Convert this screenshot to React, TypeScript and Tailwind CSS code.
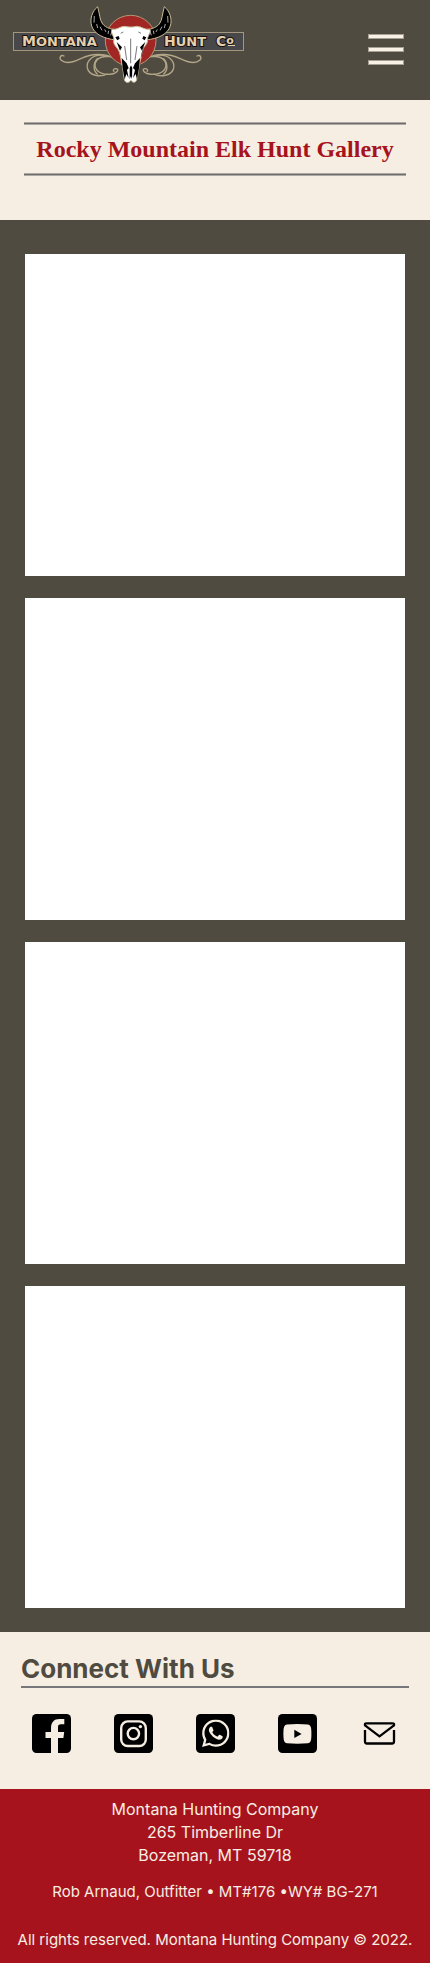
import React from "react";
import { SiWhatsapp } from "react-icons/si";

const photos = [1, 2, 3, 4];

function Flourish() {
  return (
    <g fill="none" stroke="#b3a688" strokeWidth="4" strokeLinecap="round">
      <path d="M-48 168C-58 163 -64 173 -56 181C-42 194 -14 184 4 175C34 161 72 158 104 176" />
      <path d="M72 166C38 162 18 182 22 204C27 228 62 232 82 222" />
      <path d="M88 170C54 166 42 186 46 202C52 220 76 226 96 222C114 218 118 206 108 206C100 206 98 212 102 214" />
      <path d="M52 176C40 188 38 212 52 222" />
    </g>
  );
}

function Horn() {
  return (
    <>
      <path
        d="M53 20C36 34 29 58 35 78C43 102 70 116 108 120L116 88C96 90 78 84 68 72C59 60 59 42 53 20Z"
        fill="#000"
        stroke="#c9b893"
        strokeWidth="3"
      />
      <path d="M43 48L42 68M50 72L53 84M60 80L66 91M74 88L78 96M86 92L84 102M96 94L92 106" stroke="#fff" strokeWidth="2" fill="none" />
    </>
  );
}

function Logo() {
  return (
    <svg viewBox="12 4 236 82" className="h-[82px] w-[236px]" role="img" aria-label="Montana Hunt Co">
      <rect x="13.5" y="32.5" width="230" height="18" fill="#48484a" stroke="#a3977d" />
      <g transform="translate(80 0) scale(.3333)">
        <Flourish />
        <g transform="translate(303 0) scale(-1 1)">
          <Flourish />
        </g>
        <circle cx="152" cy="122" r="76" fill="#a12624" stroke="#b09a74" strokeWidth="3" />
        <Horn />
        <g transform="translate(306 0) scale(-1 1)">
          <Horn />
        </g>
        <path
          d="M96 88C112 90 118 80 134 79C148 82 158 82 170 79C186 80 194 90 210 88C214 96 204 106 202 118C205 130 194 137 190 146C184 160 184 176 179 190C175 210 174 228 169 242C164 250 157 247 153 241C148 248 139 250 134 242C130 226 130 208 125 190C121 174 122 160 114 148C107 138 98 132 102 118C100 104 91 98 96 88Z"
          fill="#fff"
          stroke="#c9b893"
          strokeWidth="3"
        />
        <path
          d="M106 112L116 108L119 116L112 121ZM199 112L190 108L187 116L194 121ZM110 126L126 142L120 152ZM196 126L180 142L186 152ZM125 174L140 190L146 204L141 210L146 234L139 222L134 238L128 204ZM180 174L165 190L159 204L165 210L159 234L167 222L171 238L177 204ZM149 204L153 196L157 204L156 238L153 228L149 238Z"
          fill="#000"
        />
        <path d="M152 116V190M134 138L140 180M171 138L165 180M122 100L130 96M183 100L175 96M190 142L184 170" fill="none" stroke="#333" strokeWidth="2" />
      </g>
      <g
        fill="#e4cfae"
        stroke="#15120f"
        strokeWidth="2"
        paintOrder="stroke"
        className="font-['DejaVu_Sans',sans-serif] font-bold"
      >
        <text x="22" y="46" fontSize="14">
          M<tspan fontSize="13">ONTANA</tspan>
        </text>
        <text x="164" y="46" fontSize="14">
          H<tspan fontSize="13">UNT</tspan>
        </text>
        <text x="216" y="46" fontSize="14">
          C<tspan fontSize="11" dy="-2">o</tspan>
        </text>
        <path d="M228 45.5H235" stroke="#e4cfae" strokeWidth="1" />
      </g>
    </svg>
  );
}

function Tile({ children }: { children: React.ReactNode }) {
  return (
    <svg viewBox="0 0 39 39" className="size-[39px]" aria-hidden="true">
      <rect width="39" height="39" rx="4.5" fill="#000" />
      {children}
    </svg>
  );
}

const socials = [
  {
    name: "Facebook",
    icon: (
      <Tile>
        <path
          d="M19 39V24H13.5V18H19V14.5C19 8.2 22 5 27.5 5H32.3V10.2H29C26.8 10.2 26 11.2 26 13V18H32.2L31.4 24H26V39Z"
          fill="#f6eee3"
        />
      </Tile>
    ),
  },
  {
    name: "Instagram",
    icon: (
      <Tile>
        <g fill="none" stroke="#f6eee3" strokeWidth="2.4">
          <rect x="7.2" y="7.4" width="24.6" height="24.6" rx="6.5" />
          <circle cx="19.4" cy="19.6" r="5.7" />
        </g>
        <circle cx="26.4" cy="12.6" r="1.7" fill="#f6eee3" />
      </Tile>
    ),
  },
  {
    name: "WhatsApp",
    icon: (
      <Tile>
        <SiWhatsapp x="6" y="5.5" size={27.5} color="#f6eee3" />
      </Tile>
    ),
  },
  {
    name: "YouTube",
    icon: (
      <Tile>
        <path
          d="M9 10.4Q19.3 9.4 29.8 10.4C32.8 10.7 33.4 13.5 33.4 19.8S32.8 29 29.8 29.3Q19.3 30.2 9 29.3C6 29 5.4 26.1 5.4 19.8S6 10.7 9 10.4Z"
          fill="#f6eee3"
        />
        <path d="M16.3 15.8L23.6 19.9L16.3 24Z" fill="#000" />
      </Tile>
    ),
  },
  {
    name: "Email",
    icon: (
      <svg viewBox="0 0 39 39" className="size-[39px]" fill="none" stroke="#000" strokeWidth="2.3" aria-hidden="true">
        <path d="M5 16V27.5Q5 29.5 7 29.5H32Q34 29.5 34 27.5V16" />
        <path d="M6.5 9.3H32.5Q34.5 9.3 34 11.3L19.5 22.3L5 11.3Q4.5 9.3 6.5 9.3Z" />
      </svg>
    ),
  },
];

export default function App() {
  return (
    <div className="bg-[#4f4b40] font-['Inter',sans-serif]">
      <header className="flex h-[100px] items-start justify-between pt-1 pr-[26px] pl-3">
        <a href="#home">
          <Logo />
        </a>
        <button type="button" aria-label="Open menu" className="mt-[30px] flex w-9 flex-col gap-2">
          <span className="h-[5px] border border-[#a5a093] bg-[#faf1e6]" />
          <span className="h-[5px] border border-[#a5a093] bg-[#faf1e6]" />
          <span className="h-[5px] border border-[#a5a093] bg-[#faf1e6]" />
        </button>
      </header>

      <main>
        <section className="bg-[#f6eee3] px-6 pt-[22px] pb-11">
          <div className="h-[3px] border-y border-[#ada8a3] bg-[#6f6c6d]" />
          <h1 className="py-2 text-center font-['Liberation_Serif',serif] text-2xl leading-8 font-bold whitespace-nowrap text-[#a6131c]">
            Rocky Mountain Elk Hunt Gallery
          </h1>
          <div className="h-[3px] border-y border-[#ada8a3] bg-[#6f6c6d]" />
        </section>

        <section aria-label="Gallery" className="flex flex-col gap-[22px] px-[25px] pt-[34px] pb-6">
          {photos.map((n) => (
            <div key={n} className="h-[322px] bg-white" />
          ))}
        </section>
      </main>

      <section className="bg-[#f6eee3] px-[21px] pt-5 pb-9">
        <h2 className="border-b-2 border-[#77767a] text-[26px] leading-[34px] font-bold text-[#4f4b40]">
          Connect With Us
        </h2>
        <nav aria-label="Social links" className="flex justify-between pt-[26px] pr-[10px] pl-[11px]">
          {socials.map((s) => (
            <a key={s.name} href={"#" + s.name.toLowerCase()} aria-label={s.name}>
              {s.icon}
            </a>
          ))}
        </nav>
      </section>

      <footer className="bg-[#a6131c] pt-[9px] pb-3 text-center text-[15px] leading-[23px] text-[#f6eee3]">
        <address className="text-base leading-[23px] not-italic">
          Montana Hunting Company
          <br />
          265 Timberline Dr
          <br />
          Bozeman, MT 59718
        </address>
        <p className="mt-[13px]">Rob Arnaud, Outfitter • MT#176 •WY# BG-271</p>
        <p className="mt-[25px] whitespace-nowrap">All rights reserved. Montana Hunting Company © 2022.</p>
      </footer>
    </div>
  );
}
